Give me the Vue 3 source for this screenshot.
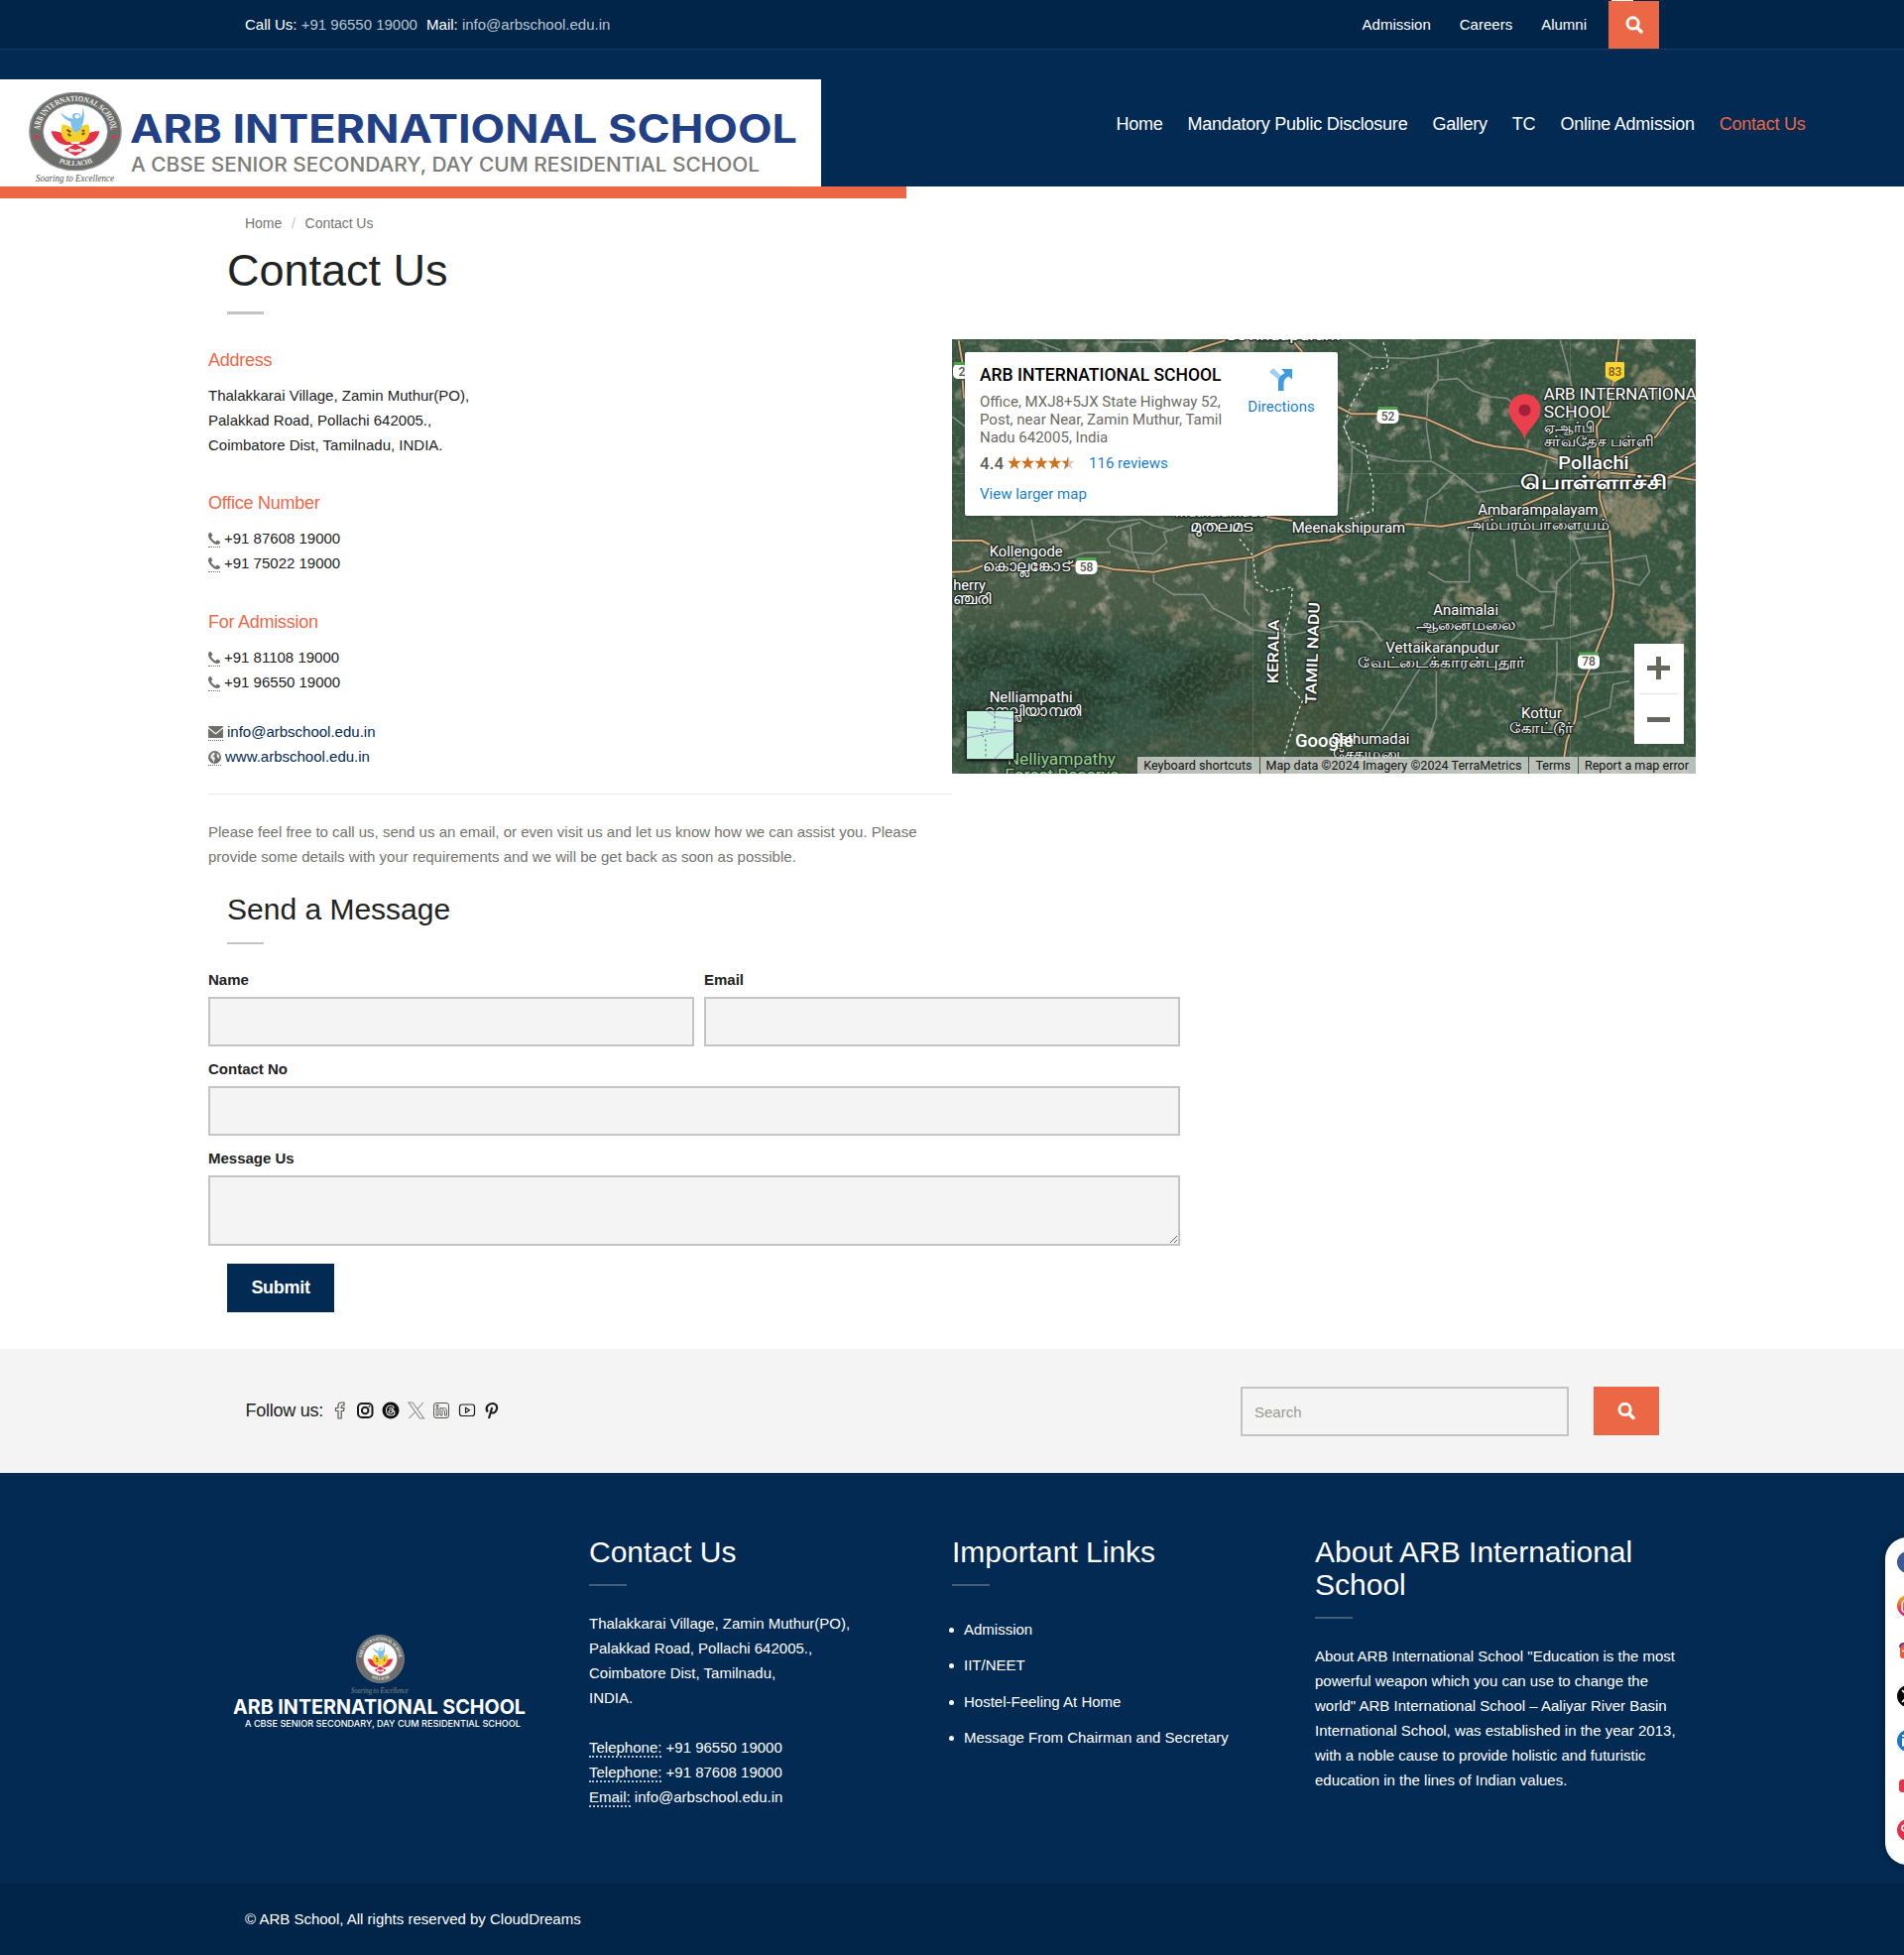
<script setup>
const topLinks = ['Admission', 'Careers', 'Alumni']
const navLinks = ['Home', 'Mandatory Public Disclosure', 'Gallery', 'TC', 'Online Admission', 'Contact Us']
const importantLinks = ['Admission', 'IIT/NEET', 'Hostel-Feeling At Home', 'Message From Chairman and Secretary']
const phonePath = 'M1408 1112q0 27-10 70.5t-21 68.5q-21 50-122 106-94 51-186 51-27 0-53-3.5t-57.5-12.5-47-14.5-55.5-20.5-49-18q-98-35-175-83-127-79-264-216t-216-264q-48-77-83-175-3-9-18-49t-20.5-55.5-14.5-47-12.5-57.5-3.5-53q0-92 51-186 56-101 106-122 25-11 68.5-21t70.5-10q14 0 21 3 18 6 53 76 11 19 30 54t35 63.5 31 53.5q3 4 17.5 25t21.5 35.5 7 28.5q0 20-28.5 50t-62 55-62 53-28.5 46q0 9 5 22.5t8.5 20.5 14 24 11.5 19q76 137 174 235t235 174q2 1 19 11.5t24 14 20.5 8.5 22.5 5q18 0 46-28.5t53-62 55-62 50-28.5q14 0 28.5 7t35.5 21.5 25 17.5q25 15 53.5 31t63.5 35 54 30q70 35 76 53 3 7 3 21z'
</script>

<template>
  <div class="page">
    <svg class="defs" width="0" height="0" aria-hidden="true">
      <defs>
        <symbol id="emblem" viewBox="0 0 100 100">
          <circle cx="50" cy="50" r="49" fill="#6d6e6a" stroke="#8d9297" stroke-width="1.500" />
          <circle cx="50" cy="50" r="34.500" fill="#fff" stroke="#9aa0b5" stroke-width="1" />
          <path id="ringTop" d="M12.500 56A38 38 0 1 1 87.500 56" fill="none" />
          <path id="ringBottom" d="M22 83A43.500 43.500 0 0 0 78 83" fill="none" />
          <text class="ring-text" font-size="10"><textPath href="#ringTop" startOffset="8" textLength="116" lengthAdjust="spacingAndGlyphs">ARB INTERNATIONAL SCHOOL</textPath></text>
          <text class="ring-text" font-size="9"><textPath href="#ringBottom" startOffset="12" textLength="38" lengthAdjust="spacingAndGlyphs">POLLACHI</textPath></text>
          <path d="M8.500 54.500l2.200 2.700-2.200 2.700-2.200-2.700zM91.500 54.500l2.200 2.700-2.200 2.700-2.200-2.700z" fill="#e5304a" stroke="#e5304a" />
          <path d="M24 50c8-1 16 2 22 16h8c6-14 14-17 22-16-3 12-10 18-20 17H44c-10 1-17-5-20-17z" fill="#e5304a" />
          <path d="M36 41c7 1 12 5 14 12 2-7 7-11 14-12 3 9 1 17-5 22H41c-6-5-8-13-5-22z" fill="#f6cf2b" />
          <path d="M34 26c6 6 10 8 14 8-3-4 0-8 4-7 4 0 5 5 2 8 3-3 4-8 4-15 3 10 1 20-3 28l-5 4c-3-4-5-9-5-14-5-2-9-6-11-12z" fill="#7cc1ec" />
          <circle cx="52" cy="31" r="2.600" fill="#fff" />
          <path d="M41 48l4 3M42 53l3 3M57 49h3M57 54l3-2" stroke="#7a5a20" stroke-width="2.500" />
          <path d="M50 66l12 7-12 8-12-8z" fill="#e5304a" />
          <path d="M43 71l7 2 7-2v5H43z" fill="#dfe6e2" />
        </symbol>
        <symbol id="search" viewBox="0 0 18 18">
          <circle cx="7.600" cy="7.400" r="5.600" fill="none" stroke="#fff" stroke-width="3" />
          <path d="M12 12l4 4" stroke="#fff" stroke-width="3.400" stroke-linecap="round" />
        </symbol>
      </defs>
    </svg>

    <header>
      <div class="topbar">
        <div class="reach">Call Us: <a>+91 96550 19000</a> <span>Mail: <a>info@arbschool.edu.in</a></span></div>
        <nav class="toplinks">
          <a v-for="l in topLinks" :key="l">{{ l }}</a>
        </nav>
        <div class="topsearch"><svg width="18" height="18"><use href="#search" /></svg></div>
      </div>
      <div class="mainbar">
        <div class="brand">
          <svg width="828" height="108" viewBox="0 0 828 108">
            <svg x="29" y="12.500" width="94" height="80" viewBox="0 0 100 100" preserveAspectRatio="none"><use href="#emblem" /></svg>
            <text x="36" y="103" class="script" font-size="10.500" fill="#50534e" textLength="79" lengthAdjust="spacingAndGlyphs">Soaring to Excellence</text>
            <text x="131" y="63.500" class="logo-name" font-size="39.500" fill="#214085" textLength="673" lengthAdjust="spacingAndGlyphs">ARB INTERNATIONAL SCHOOL</text>
            <text x="132" y="93" class="logo-sub" font-size="19.500" fill="#7b7d76" textLength="634" lengthAdjust="spacingAndGlyphs">A CBSE SENIOR SECONDARY, DAY CUM RESIDENTIAL SCHOOL</text>
          </svg>
        </div>
        <nav class="mainnav">
          <a v-for="l in navLinks" :key="l" :class="{ active: l === 'Contact Us' }">{{ l }}</a>
        </nav>
      </div>
    </header>
    <div class="accent"></div>

    <main>
      <div class="crumbs"><span>Home</span><i>/</i><span>Contact Us</span></div>
      <h1>Contact Us</h1>
      <div class="columns">
        <section class="info">
          <h4>Address</h4>
          <p>Thalakkarai Village, Zamin Muthur(PO),<br />Palakkad Road, Pollachi 642005.,<br />Coimbatore Dist, Tamilnadu, INDIA.</p>
          <h4>Office Number</h4>
          <p>
            <span v-for="n in ['+91 87608 19000', '+91 75022 19000']" :key="n" class="row"><abbr><svg width="12" height="12" viewBox="0 0 1408 1408"><path :d="phonePath" /></svg></abbr>{{ n }}</span>
          </p>
          <h4 class="admission">For Admission</h4>
          <p>
            <span v-for="n in ['+91 81108 19000', '+91 96550 19000']" :key="n" class="row"><abbr><svg width="12" height="12" viewBox="0 0 1408 1408"><path :d="phonePath" /></svg></abbr>{{ n }}</span>
          </p>
          <p class="web">
            <span class="row"><abbr><svg width="15" height="12" viewBox="0 0 15 12"><path d="M1 0h13q1 0 1 1L7.500 7 0 1q0-1 1-1zM0 2.600L7.500 8.400 15 2.600V11q0 1-1 1H1q-1 0-1-1z" /></svg></abbr>info@arbschool.edu.in</span>
            <span class="row"><abbr><svg width="13" height="13" viewBox="0 0 13 13"><circle cx="6.500" cy="6.500" r="6.500" /><path d="M3 3.500L5.500 1.500 7 2.500 6 4.500 4.500 5 6.500 6.500 7 8 6 10 5.500 12 4.500 9.500 2 6.500zM9 2L11.500 5 10.500 8 9 6.500 8.500 4.500z" fill="#fff" opacity=".85" /></svg></abbr>www.arbschool.edu.in</span>
          </p>
          <hr />
          <p class="note">Please feel free to call us, send us an email, or even visit us and let us know how we can assist you. Please provide some details with your requirements and we will be get back as soon as possible.</p>
        </section>

        <section class="map">
          <svg class="sat" width="750" height="438" viewBox="0 0 750 438">
            <defs>
              <filter id="tan" x="0" y="0" width="100%" height="100%">
                <feTurbulence type="fractalNoise" baseFrequency=".055 .06" numOctaves="5" seed="7" />
                <feColorMatrix values="0 0 0 0 .56  0 0 0 0 .49  0 0 0 0 .39  4 3 0 0 -3.850" />
              </filter>
              <filter id="grain" x="0" y="0" width="100%" height="100%">
                <feTurbulence type="fractalNoise" baseFrequency=".25" numOctaves="3" seed="3" />
                <feColorMatrix values="0 0 0 0 .08  0 0 0 0 .15  0 0 0 0 .10  3 0 0 0 -1.300" />
              </filter>
              <filter id="ridge" x="0" y="0" width="100%" height="100%">
                <feTurbulence type="fractalNoise" baseFrequency=".014 .035" numOctaves="5" seed="12" />
                <feColorMatrix values="0 0 0 0 .04  0 0 0 0 .10  0 0 0 0 .07  5 0 0 0 -2.200" />
              </filter>
              <filter id="soft" x="-20%" y="-50%" width="140%" height="200%"><feGaussianBlur stdDeviation="14" /></filter>
              <filter id="town" x="-10%" y="-10%" width="120%" height="120%"><feTurbulence type="fractalNoise" baseFrequency=".13" numOctaves="3" seed="9" result="n" /><feDisplacementMap in="SourceGraphic" in2="n" scale="44" /><feGaussianBlur stdDeviation="1" /></filter>
              <linearGradient id="fade" x1="0" y1="0" x2="0" y2="1"><stop offset="0" stop-color="#000" /><stop offset=".2" stop-color="#fff" /></linearGradient>
              <linearGradient id="fadeX"><stop offset=".65" stop-color="#000" stop-opacity="0" /><stop offset="1" stop-color="#000" /></linearGradient>
              <mask id="hills"><rect y="275" width="420" height="163" fill="url(#fade)" /><rect y="275" width="420" height="163" fill="url(#fadeX)" /></mask>
            </defs>
            <rect width="750" height="438" fill="#38533e" />
            <path d="M0 190L300 175 330 300 0 300z" fill="#59614b" opacity=".55" filter="url(#soft)" />
            <rect width="750" height="438" filter="url(#tan)" opacity=".62" />
            <path d="M0 310L90 300 200 305 300 325 340 350 300 390 180 400 0 395z" fill="#20392a" opacity=".85" filter="url(#soft)" />
            <path d="M300 320L420 345 400 438 120 438 230 380z" fill="#4a5038" opacity=".6" filter="url(#soft)" />
            <g mask="url(#hills)"><rect y="275" width="420" height="163" filter="url(#ridge)" opacity=".7" /></g>
            <g fill="#ad987a" filter="url(#town)" opacity=".65">
              <ellipse cx="685" cy="175" rx="30" ry="22" /><ellipse cx="665" cy="135" rx="26" ry="13" /><ellipse cx="521" cy="262" rx="12" ry="11" />
              <ellipse cx="606" cy="371" rx="13" ry="9" /><ellipse cx="722" cy="285" rx="20" ry="14" /><ellipse cx="706" cy="45" rx="20" ry="14" />
              <ellipse cx="230" cy="275" rx="13" ry="6" /><ellipse cx="400" cy="297" rx="10" ry="6" /><ellipse cx="693" cy="390" rx="10" ry="14" />
            </g>
            <rect width="750" height="438" filter="url(#grain)" opacity=".65" />
            <path d="M303.500 0v438M623.500 0v438M0 135.500h750" stroke="#b8c4b8" opacity=".22" />

            <g fill="none" transform="translate(-10 -12) scale(.33333)" stroke-linejoin="round">
              <g stroke="#949995" stroke-width="5" opacity=".8">
                <path d="M270 580L285 660M285 645L380 615 430 580 520 590 600 580 640 600 700 615M600 590L530 610 500 640 510 660 570 680 640 685 680 650 670 620 730 600M570 600L575 680 600 740M380 700L430 682 510 680M640 745L640 770 700 808 790 808 820 850 870 875 940 915 1060 930 1200 900M920 700L915 850 930 870M30 270L70 300M280 40L360 70M520 45L640 45 665 75" />
              </g>
              <path d="M900 640L940 690 950 770 990 800 1060 785 1055 850 1035 920 1045 1080 1090 1130 1070 1180 1030 1310" stroke="#d9ddd8" stroke-width="4" stroke-dasharray="9 9" />
              <g v-for="w in [11, 6]" :key="w" :stroke="w === 11 ? '#46392a' : '#ccad80'" :stroke-width="w"><path d="M30 740L80 738 130 718 480 722 520 732 640 740 740 720 840 708 940 695 1010 662 1100 650 1200 640M30 645L120 645 150 660M745 75L790 60 855 40M1060 40L1090 75M50 40L62 110M62 160L66 215M980 572L1060 585" /></g>
            </g>
            <g fill="none" transform="translate(380 -12) scale(.33333)" stroke-linejoin="round">
              <g stroke="#949995" stroke-width="5" opacity=".8">
                <path d="M60 45L130 90 250 95 380 75 500 45M330 95L330 160 300 200 295 300 310 400M330 160L390 155 430 190 490 210 540 215 580 250M700 40L720 110 735 180M70 265L45 300 70 360 70 430 55 560M70 360L110 385 210 405 310 405 380 445 450 500 560 480 640 480M380 445L330 500 300 520 290 590M605 340L600 370M660 400L650 450M440 600L425 680 425 770 350 770 300 740M560 640L570 750 640 800 690 800M850 630L740 640 760 700 690 770 680 900 640 910M760 715L850 710 960 690 970 740 940 780 860 760M0 890L100 890 140 920 160 950M370 950L410 915 500 930 600 945 720 940 850 905M350 955L270 1040 160 1220M325 1040L325 1180 300 1250M690 950L690 1050 780 1050 900 1040M690 1050L680 1140M770 1180L850 1150 860 1080 910 1070" />
              </g>
              <path d="M165 45L180 100 175 125 130 122 65 240 45 300 65 345 110 360 125 440 135 480 133 555 60 580" stroke="#d9ddd8" stroke-width="4" stroke-dasharray="9 9" />
              <g v-for="w in [11, 6]" :key="w" :stroke="w === 11 ? '#46392a' : '#ccad80'" :stroke-width="w">
                <path d="M0 645L60 620 130 605 240 595 340 602 440 585 560 550 680 500M800 450L820 430 880 395 940 365 990 330 1050 245 1110 200M27 240L70 262 210 262 290 275 370 310 440 345 500 360 590 370 690 400M877 36L868 110 850 240 810 300 815 400 820 520 850 620 862 800 855 870 820 950 790 1030 755 1110 745 1190 720 1250 712 1300M850 440L1030 455 1110 410M1030 450L1110 462" />
              </g>
            </g>

            <g class="labels" transform="translate(-10 -12) scale(.33333)">
              <text x="855" y="40" textLength="350" lengthAdjust="spacingAndGlyphs">Govindapuram</text>
              <text x="705" y="574" textLength="275" lengthAdjust="spacingAndGlyphs">Muthalamada</text>
              <text x="750" y="618" textLength="190" lengthAdjust="spacingAndGlyphs">മുതലമട</text>
              <text x="1058" y="620" textLength="343" lengthAdjust="spacingAndGlyphs">Meenakshipuram</text>
              <text x="143" y="694" textLength="222" lengthAdjust="spacingAndGlyphs">Kollengode</text>
              <text x="122" y="738" textLength="268" lengthAdjust="spacingAndGlyphs">കൊല്ലങ്കോട്</text>
              <text x="34" y="796" textLength="98" lengthAdjust="spacingAndGlyphs">herry</text>
              <text x="32" y="838" textLength="116" lengthAdjust="spacingAndGlyphs">ഞ്ചരി</text>
              <text x="143" y="1133" textLength="252" lengthAdjust="spacingAndGlyphs">Nelliampathi</text>
              <text x="125" y="1176" textLength="295" lengthAdjust="spacingAndGlyphs">നെല്ലിയാമ്പതി</text>
              <text x="197" y="1322" class="park" textLength="328" lengthAdjust="spacingAndGlyphs">Nelliyampathy</text>
              <text x="190" y="1372" class="park" textLength="345" lengthAdjust="spacingAndGlyphs">Forest Reserve</text>
              <text class="state" transform="translate(1016 1078) rotate(-89)" textLength="194" lengthAdjust="spacingAndGlyphs">KERALA</text>
              <text class="state" transform="translate(1131 1140) rotate(-88)" textLength="308" lengthAdjust="spacingAndGlyphs">TAMIL NADU</text>
            </g>
            <g class="labels" transform="translate(380 -12) scale(.33333)">
              <text x="650" y="219" class="poi" textLength="490" lengthAdjust="spacingAndGlyphs">ARB INTERNATIONAL</text>
              <text x="650" y="272" class="poi" textLength="202" lengthAdjust="spacingAndGlyphs">SCHOOL</text>
              <text x="650" y="318" textLength="155" lengthAdjust="spacingAndGlyphs">ஏஆர்பி</text>
              <text x="650" y="359" textLength="335" lengthAdjust="spacingAndGlyphs">சர்வதேச பள்ளி</text>
              <text x="694" y="430" class="city" textLength="214" lengthAdjust="spacingAndGlyphs">Pollachi</text>
              <text x="580" y="490" class="city tamil" textLength="443" lengthAdjust="spacingAndGlyphs">பொள்ளாச்சி</text>
              <text x="451" y="566" textLength="364" lengthAdjust="spacingAndGlyphs">Ambarampalayam</text>
              <text x="417" y="611" textLength="432" lengthAdjust="spacingAndGlyphs">அம்பரம்பாளையம்</text>
              <text x="316" y="870" textLength="197" lengthAdjust="spacingAndGlyphs">Anaimalai</text>
              <text x="263" y="915" textLength="302" lengthAdjust="spacingAndGlyphs">ஆனைமலை</text>
              <text x="172" y="983" textLength="344" lengthAdjust="spacingAndGlyphs">Vettaikaranpudur</text>
              <text x="88" y="1028" textLength="505" lengthAdjust="spacingAndGlyphs">வேட்டைக்காரன்புதூர்</text>
              <text x="582" y="1181" textLength="123" lengthAdjust="spacingAndGlyphs">Kottur</text>
              <text x="545" y="1226" textLength="195" lengthAdjust="spacingAndGlyphs">கோட்டூர்</text>
              <text x="8" y="1260" textLength="236" lengthAdjust="spacingAndGlyphs">Sethumadai</text>
              <text x="12" y="1305" textLength="232" lengthAdjust="spacingAndGlyphs">சேதுமடை</text>
              <text x="-102" y="1270" class="google" textLength="176" lengthAdjust="spacingAndGlyphs">Google</text>
            </g>
            <g class="shield">
              <g v-for="s in [{ x: 135.500, y: 221, t: '58' }, { x: 439.500, y: 69, t: '52' }, { x: 642, y: 316.500, t: '78' }, { x: 12, y: 24, t: '2' }]" :key="s.t" :transform="`translate(${s.x} ${s.y})`">
                <rect x="-11" y="1" width="22" height="15" rx="5" fill="#fff" /><rect x="-10" y="-1" width="20" height="3" fill="#4fa14f" />
                <text :x="s.t === '2' ? -2 : 0" y="12.500" text-anchor="middle" fill="#55584f">{{ s.t }}</text>
              </g>
              <path d="M659 24q0-1 1-1h17q1 0 1 1v14l-9.500 5-9.500-5z" fill="#f8d331" />
              <text x="668.500" y="36.500" text-anchor="middle" fill="#7a5a1c">83</text>
            </g>
            <path d="M577.500 101.500C575 89 561.500 84 561.500 71a16 15.800 0 0 1 32 0C593.500 84 580 89 577.500 101.500z" fill="#ea3f4c" />
            <circle cx="577.500" cy="71.500" r="6" fill="#a3203c" />
          </svg>

          <div class="place">
            <div class="place-text">
              <b>ARB INTERNATIONAL SCHOOL</b>
              <p>Office, MXJ8+5JX State Highway 52,<br />Post, near Near, Zamin Muthur, Tamil<br />Nadu 642005, India</p>
              <div class="rating">
                <strong>4.4</strong>
                <svg width="68" height="14" viewBox="0 0 68 14">
                  <g v-for="i in 5" :key="i" :transform="`translate(${(i - 1) * 13.600} 0)`">
                    <path d="M6.800 0l1.700 4.800h5L9.500 7.900l1.500 5-4.200-3-4.200 3 1.500-5L.1 4.800h5z" :fill="i === 5 ? '#cdd1d6' : '#d0711e'" />
                    <path v-if="i === 5" d="M6.800 0v9.900l-4.200 3 1.500-5L.1 4.800h5z" fill="#d0711e" />
                  </g>
                </svg>
                <a>116 reviews</a>
              </div>
              <a>View larger map</a>
            </div>
            <div class="directions">
              <svg width="24" height="24" viewBox="0 0 24 24">
                <path d="M0 4L4 0 12 8V14z" fill="#a4cdee" />
                <path d="M9 23V14q0-5 5-8l1.500-1L12.500 1H23V11.500L19.500 8.500 17 10q-2.500 2-2.500 5v8z" fill="#3d9be0" />
              </svg>
              <a>Directions</a>
            </div>
          </div>
          <div class="thumb">
            <svg width="47" height="48" viewBox="0 0 47 48"><rect width="47" height="48" fill="#c3f0dc" /><path d="M0 16L20 18 47 20M0 27L25 22 47 20M20 0L30 6 47 8M28 48L36 40 47 32" fill="none" stroke="#a9b6d6" stroke-width="1.300" /><path d="M28 0V18L14 22 19 30V48" fill="none" stroke="#7f8c9a" stroke-width="1.300" stroke-dasharray="2.500 2.500" /></svg>
          </div>
          <div class="zoomer"><span class="plus"></span><i></i><span class="minus"></span></div>
          <div class="legal"><span>Keyboard shortcuts</span><span>Map data ©2024 Imagery ©2024 TerraMetrics</span><span>Terms</span><span>Report a map error</span></div>
        </section>
      </div>

      <h2>Send a Message</h2>
      <form>
        <div class="pair">
          <label class="name">Name<input type="text" /></label>
          <label class="email">Email<input type="text" /></label>
        </div>
        <label>Contact No<input type="text" /></label>
        <label>Message Us<textarea></textarea></label>
        <button type="button">Submit</button>
      </form>
    </main>

    <section class="follow">
      <span class="follow-label">Follow us:</span>
      <svg class="social" width="168" height="18" viewBox="0 0 168 18" fill="none" stroke="#1a1c19">
        <path d="M4 17V9.500H1.500V6.500H4V4.500Q4 1 7.500 1H10V4H8.300Q7.200 4 7.200 5.200V6.500H10L9.500 9.500H7.200V17z" stroke="#555850" stroke-width="1.200" />
        <rect x="24" y="2" width="14.500" height="14" rx="4" stroke-width="2" /><circle cx="31.200" cy="9" r="3.300" stroke-width="2" /><circle cx="35.400" cy="5" r=".6" />
        <circle cx="57" cy="9" r="8.500" fill="#111" stroke="none" />
        <path d="M60.500 6.500Q59.500 4 57 4 52.500 4 52.500 9T57.200 14Q61 14 61 11.300 61 8.700 57.500 8.700 55 8.700 55 10.400 55 11.800 57 11.800 59.300 11.800 59.300 8.800 59.300 6.500 57.200 6.500 55.800 6.500 55.300 7.500" stroke="#eee" stroke-width="1.100" />
        <path d="M75 1H79L90.500 17H86.500zM90 1L83.500 8M81.500 10.500L75.500 17" stroke="#8a8d88" stroke-width="1.100" />
        <rect x="100.500" y="1.500" width="15" height="15" rx="2.500" stroke="#55584f" /><path d="M103 6.500h2v7.500h-2zM103 3.500h2v1.500h-2zM107 6.500h2v1q3.500-2.500 4.500 1.500v5h-2v-4.500q-.5-2-2.500 0v4.500h-2z" stroke="#55584f" stroke-width=".9" />
        <rect x="126.500" y="3" width="15" height="11.500" rx="2.500" stroke-width="1.200" /><path d="M132.500 6.300L136.500 8.800 132.500 11.300z" stroke-width="1.100" />
        <path d="M156 17L159.200 6M154.800 10.500Q152.500 7.500 154.500 4.500 157 1.500 160.500 2 164.800 3 164 7.500 162.500 12 159.500 11.500 158 11 157.800 10" stroke-width="2.100" />
      </svg>
      <div class="finder">
        <input type="text" placeholder="Search" />
        <button type="button"><svg width="18" height="19" viewBox="0 0 18 18"><use href="#search" /></svg></button>
      </div>
    </section>

    <footer>
      <div class="foot-brand">
        <svg width="300" height="100" viewBox="0 0 300 100">
          <use href="#emblem" x="125" y="0" width="49" height="49" />
          <text x="120" y="59" class="script" font-size="8" fill="#8a8d88" textLength="58" lengthAdjust="spacingAndGlyphs">Soaring to Excellence</text>
          <text x="1" y="79.500" class="logo-name" font-size="20.500" fill="#fff" textLength="295" lengthAdjust="spacingAndGlyphs">ARB INTERNATIONAL SCHOOL</text>
          <text x="13" y="92.500" class="logo-sub" font-size="9.500" fill="#fff" textLength="278" lengthAdjust="spacingAndGlyphs">A CBSE SENIOR SECONDARY, DAY CUM RESIDENTIAL SCHOOL</text>
        </svg>
      </div>
      <div class="foot-contact">
        <h3>Contact Us</h3>
        <p>Thalakkarai Village, Zamin Muthur(PO),<br />Palakkad Road, Pollachi 642005.,<br />Coimbatore Dist, Tamilnadu,<br />INDIA.<br /><br /><abbr>Telephone:</abbr> +91 96550 19000<br /><abbr>Telephone:</abbr> +91 87608 19000<br /><abbr>Email:</abbr> info@arbschool.edu.in</p>
      </div>
      <div class="foot-links">
        <h3>Important Links</h3>
        <ul><li v-for="l in importantLinks" :key="l">{{ l }}</li></ul>
      </div>
      <div class="foot-about">
        <h3>About ARB International School</h3>
        <p>About ARB International School "Education is the most<br />powerful weapon which you can use to change the<br />world" ARB International School – Aaliyar River Basin<br />International School, was established in the year 2013,<br />with a noble cause to provide holistic and futuristic<br />education in the lines of Indian values.</p>
      </div>
    </footer>
    <div class="copyright">© ARB School, All rights reserved by CloudDreams</div>

    <aside class="dock">
      <svg width="19" height="330" viewBox="0 0 19 330">
        <circle cx="23" cy="25" r="11" fill="#3b5998" />
        <linearGradient id="insta" x1="0" y1="0" x2="0" y2="1"><stop offset="0" stop-color="#f7b824" /><stop offset=".55" stop-color="#ee4b3c" /><stop offset="1" stop-color="#c32aa3" /></linearGradient>
        <circle cx="23" cy="69" r="11" fill="url(#insta)" /><rect x="17" y="63.500" width="12" height="12" rx="3.500" fill="none" stroke="#fff" stroke-width="1.500" />
        <rect x="15" y="107" width="16" height="15" rx="3" fill="#ee5a3c" /><path d="M15 111q0-4 4-4" stroke="#5a3a8a" stroke-width="2" fill="none" /><path d="M17 114.500h4v3" stroke="#fff" stroke-width="1.500" fill="none" />
        <circle cx="23" cy="160" r="11" fill="#080808" /><path d="M17 154l12 12M17 166l4-4" stroke="#fff" stroke-width="1.600" />
        <circle cx="23" cy="205" r="11" fill="#1a78c8" /><path d="M18 202.500v8M18 199v2" stroke="#fff" stroke-width="2" />
        <rect x="14" y="244" width="18" height="13" rx="3.500" fill="#e5314a" />
        <circle cx="23" cy="295" r="11" fill="#e5314a" /><circle cx="20" cy="293" r="3" fill="none" stroke="#fff" stroke-width="1.600" />
      </svg>
    </aside>
  </div>
</template>

<style>
body { margin: 0; background: #fff; overflow: hidden; }
</style>

<style scoped>
* { box-sizing: border-box; }
.page { position: relative; width: 1920px; height: 1971px; overflow: hidden; font: 15px/25px "Liberation Sans", Arial, sans-serif; color: #212322; background: #fff; }
.defs { position: absolute; }
h1, h2, h3, h4, p, ul { margin: 0; font-weight: 400; }
svg { display: block; }
.ring-text { fill: #f0f0ee; font-family: "Liberation Serif", serif; font-weight: 700; }
.script { font-family: "Liberation Serif", serif; font-style: italic; }
.logo-name { font-family: Inter, sans-serif; font-weight: 700; }
.logo-sub { font-family: Inter, sans-serif; font-weight: 500; }

.topbar { display: flex; height: 50px; padding: 0 247px; background: #002548; border-bottom: 1px solid #173c63; color: #fff; }
.reach { flex: 1; padding-top: 12px; }
.reach a { color: #bac4cf; }
.reach span { margin-left: 5px; }
.toplinks { display: flex; gap: 29px; padding-top: 12px; margin-right: 22px; }
.topsearch { position: relative; width: 51px; height: 48px; margin-top: 1px; background: #ec6746; display: flex; align-items: center; justify-content: center; }
.topsearch::before { content: ""; position: absolute; left: 3px; top: -1px; width: 22px; height: 1px; background: #fff; }
.mainbar { display: flex; justify-content: space-between; height: 138px; background: #022a52; }
.brand { width: 828px; height: 108px; margin-top: 30px; background: #fff; }
.mainnav { display: flex; gap: 25px; padding: 63px 99.500px 0 0; color: #fff; font-size: 18px; letter-spacing: -.23px; }
.mainnav .active { color: #ec6746; }
.accent { width: 914px; height: 12px; background: #ec6746; }

main { height: 1160px; padding: 15px 210px 0; }
.crumbs { display: flex; gap: 9.800px; padding-left: 37px; font-size: 14px; line-height: 20px; letter-spacing: -.05px; color: #73756e; }
.crumbs i { font-style: normal; color: #c4c4c4; }
h1 { margin: 13px 0 0 19px; height: 94px; font-size: 45px; line-height: 50px; }
h1::after, h2::after, h3::after { content: ""; display: block; width: 37px; height: 3px; margin-top: 17px; background: #c4c4c4; }
h1::after { margin-top: 16px; }
.columns { display: flex; height: 558px; }
.info { width: 750px; padding-top: 11px; }
h4 { font-size: 18px; line-height: 20px; letter-spacing: -.25px; color: #ec6746; margin: 36px 0 13px; }
h4:first-child { margin-top: 0; }
h4.admission { margin-top: 37px; }
.row { display: flex; align-items: flex-start; height: 25px; }
.row abbr { border-bottom: 1px dotted #6d6f68; height: 17px; margin: 5px 4px 0 0; display: flex; align-items: center; fill: #6d6f68; }
.web { margin-top: 25px; color: #022a52; }
hr { border: 0; border-top: 1px solid #e9e9e9; margin: 25px 0 25px; height: 0; }
.note { color: #73756e; }

.map { position: relative; width: 750px; height: 438px; overflow: hidden; font-family: Roboto, sans-serif; }
.labels { fill: #fff; stroke: #26302a; stroke-width: 9px; paint-order: stroke; stroke-linejoin: round; font-size: 45px; font-family: Roboto, sans-serif; }
.labels .poi { font-size: 49px; }
.labels .park { fill: #8ed08a; font-size: 50px; }
.labels .state { font-size: 46px; font-weight: 500; }
.labels .city { font-size: 56px; font-weight: 500; }
.labels .tamil { font-weight: 700; }
.labels .google { stroke: none; font-size: 56px; font-weight: 500; }
.shield { font-size: 12px; font-weight: 500; }
.place { position: absolute; left: 13px; top: 13px; width: 376px; height: 165px; background: #fff; border-radius: 2px; padding: 11px 0 0 15px; display: flex; color: #5b5b54; box-shadow: 0 1px 3px rgba(0, 0, 0, .3); }
.place a { color: #1a7fd0; font-size: 15px; line-height: 20px; }
.place-text { width: 268px; font-size: 15px; line-height: 18px; white-space: nowrap; }
.place-text b { display: block; font-weight: 500; font-size: 17.500px; line-height: 24px; color: #000; margin-bottom: 6px; }
.place-text p { color: #6b6b63; }
.rating { display: flex; align-items: center; height: 20px; margin: 7px 0 11px; }
.rating strong { font-weight: 500; font-size: 17px; margin-right: 4px; }
.rating a { margin-left: 14px; }
.directions { width: 72px; display: flex; flex-direction: column; align-items: center; padding-top: 5px; }
.directions a { margin-top: 5px; }
.thumb { position: absolute; left: 14px; top: 374px; border: 1px solid #2c2c2c; box-shadow: 0 1px 3px #000; }
.zoomer { position: absolute; left: 688px; top: 307px; width: 50px; height: 101px; background: #fff; }
.zoomer i { position: absolute; left: 6px; top: 50px; width: 37px; height: 1px; background: #ddd; }
.plus, .minus { position: absolute; left: 13px; top: 22px; width: 23px; height: 5px; background: #66665e; }
.plus::after { content: ""; position: absolute; left: 9px; top: -9px; width: 5px; height: 23px; background: #66665e; }
.minus { top: 74px; }
.legal { position: absolute; right: 0; bottom: 0; display: flex; font-size: 12.600px; line-height: 17px; color: #111; white-space: nowrap; }
.legal span { background: rgba(215, 218, 213, .8); padding: 0 7px 0 6px; margin-left: 1px; }

h2 { height: 75px; margin-left: 19px; font-size: 30px; line-height: 33px; }
h2::after { height: 2px; }
form { width: 980px; }
.pair { display: flex; gap: 10px; }
.pair .name { width: 490px; }
.pair .email { width: 480px; }
label { display: block; font-weight: 700; height: 90px; }
input, textarea { display: block; width: 100%; height: 50px; margin: 5px 0 0; border: 2px solid #c4c4c4; border-radius: 0; background: #f4f4f4; padding: 0 12px; font: 15px "Liberation Sans", Arial, sans-serif; outline: 0; }
textarea { height: 71px; }
button { display: block; border: 0; border-radius: 0; padding: 0; }
form button { width: 108px; height: 49px; margin: 29px 0 0 19px; background: #022a52; color: #fff; font: 700 18px "Liberation Sans", Arial, sans-serif; letter-spacing: -.3px; }

.follow { display: flex; height: 125px; background: #f4f4f4; padding: 38px 247px 0; }
.follow-label { font-size: 18px; letter-spacing: -.25px; margin: 12px 0 0 .5px; }
.social { margin: 15px 0 0 11px; }
.finder { display: flex; margin-left: auto; gap: 25px; }
.finder input { width: 331px; margin: 0; }
.finder input::placeholder { color: #999a92; opacity: 1; }
.finder button { width: 66px; height: 49px; background: #ec6746; display: flex; align-items: center; justify-content: center; }

footer { display: flex; height: 414px; padding-top: 63px; background: #022a52; color: #fff; }
.foot-brand { width: 360px; margin: 100px 0 0 234px; }
h3 { font-size: 30px; line-height: 33px; }
h3::after { width: 38px; height: 2px; margin-top: 16px; background: #435d7c; }
.foot-contact { width: 366px; }
.foot-contact p { margin-top: 25px; }
.foot-contact abbr { text-decoration: none; border-bottom: 2px dotted #b9c3ce; display: inline-block; line-height: 16px; }
.foot-links { width: 366px; }
.foot-links ul { list-style: none; padding: 0 0 0 12px; margin-top: 31px; }
.foot-links li { position: relative; margin-bottom: 11.400px; }
.foot-links li::before { content: ""; position: absolute; left: -15px; top: 11px; width: 5px; height: 5px; border-radius: 50%; background: #fff; }
.foot-about { width: 380px; }
.foot-about p { margin-top: 25px; white-space: nowrap; }
.copyright { height: 72px; padding: 23px 247px 0; background: #002548; color: #fff; }
.dock { position: absolute; left: 1901px; top: 1550px; width: 44px; height: 330px; border-radius: 22px; background: #fff; box-shadow: 0 0 10px rgba(0, 0, 0, .3); }
</style>
